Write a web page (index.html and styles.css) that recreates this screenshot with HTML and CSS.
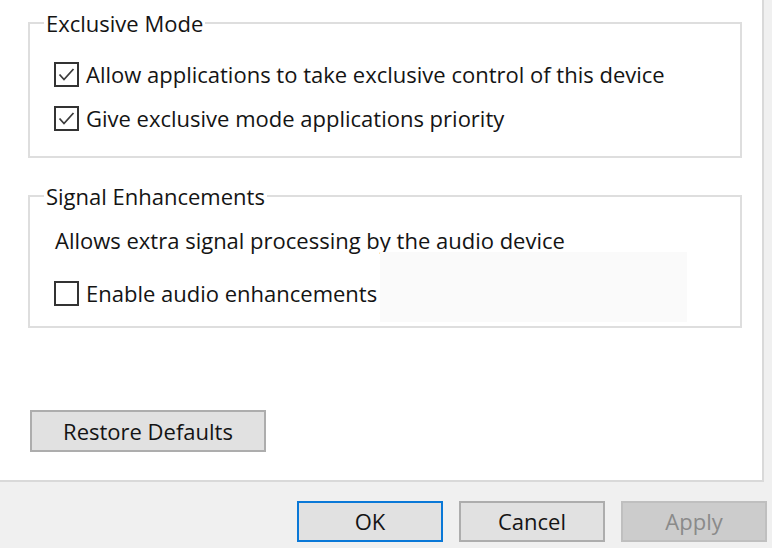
FILE: index.html
```html
<!DOCTYPE html>
<html>
<head>
<meta charset="utf-8">
<link rel="stylesheet" href="styles.css">
</head>
<body>
<div class="dialog">
  <div class="panel">
    <fieldset class="group group-exclusive">
      <legend>Exclusive Mode</legend>
      <label class="row">
        <span class="box"><svg viewBox="0 0 25 25" width="25" height="25"><polyline points="5.5,12.5 10,17.5 19.5,7" fill="none" stroke="#3c3c3c" stroke-width="1.8"/></svg></span>
        <span>Allow applications to take exclusive control of this device</span>
      </label>
      <label class="row">
        <span class="box"><svg viewBox="0 0 25 25" width="25" height="25"><polyline points="5.5,12.5 10,17.5 19.5,7" fill="none" stroke="#3c3c3c" stroke-width="1.8"/></svg></span>
        <span>Give exclusive mode applications priority</span>
      </label>
    </fieldset>
    <fieldset class="group group-signal">
      <legend>Signal Enhancements</legend>
      <div class="row desc">Allows extra signal processing by the audio device</div>
      <label class="row">
        <span class="box"></span>
        <span>Enable audio enhancements</span>
      </label>
      <div class="smudge"></div>
    </fieldset>
    <div class="restore-wrap">
      <button class="btn restore">Restore Defaults</button>
    </div>
  </div>
  <div class="footer">
    <button class="btn ok">OK</button>
    <button class="btn">Cancel</button>
    <button class="btn disabled">Apply</button>
  </div>
</div>
</body>
</html>
```
FILE: styles.css
```css
html, body {
  margin: 0;
  padding: 0;
}
body {
  width: 772px;
  height: 548px;
  overflow: hidden;
  background: #f0f0f0;
  font-family: "Open Sans", "Noto Sans", sans-serif;
  font-size: 22px;
  color: #141414;
}
.dialog {
  width: 772px;
  height: 548px;
}
.panel {
  width: 764px;
  height: 482px;
  box-sizing: border-box;
  background: #ffffff;
  border-right: 2px solid #d9d9d9;
  border-bottom: 2px solid #d9d9d9;
  padding-top: 9px;
  position: relative;
}
.group {
  margin: 0 0 0 28px;
  width: 714px;
  box-sizing: border-box;
  border: 2px solid #dedede;
  padding: 0 0 0 24px;
  position: relative;
}
.group legend {
  padding: 0 2px;
  margin-left: -10px;
  line-height: 28px;
  height: 28px;
}
.group-exclusive {
  height: 149px;
  padding-top: 15px;
}
.group-signal {
  margin-top: 24px;
  height: 146px;
  padding-top: 12px;
}
.row {
  display: flex;
  align-items: center;
  height: 44px;
  gap: 7px;
  white-space: nowrap;
}
.row.desc {
  height: 36px;
  padding-left: 1px;
}
.group-signal .row:not(.desc) {
  margin-top: 15px;
  height: 40px;
}
.box {
  width: 25px;
  height: 25px;
  box-sizing: border-box;
  border: 2px solid #333333;
  background: #ffffff;
  display: flex;
  align-items: center;
  justify-content: center;
  flex: none;
}
.box svg {
  display: block;
  flex: none;
}
.smudge {
  position: absolute;
  left: 350px;
  top: 42px;
  width: 307px;
  height: 70px;
  background: #fafafa;
}
.restore-wrap {
  padding: 82px 0 0 30px;
}
.btn {
  font-family: "Open Sans", "Noto Sans", sans-serif;
  font-size: 22px;
  color: #141414;
  background: #e1e1e1;
  border: 2px solid #adadad;
  box-sizing: border-box;
  padding: 0;
  margin: 0;
  width: 146px;
  height: 41px;
  line-height: 37px;
}
.btn.restore {
  width: 236px;
  height: 42px;
}
.footer {
  display: flex;
  justify-content: flex-end;
  gap: 16px;
  padding: 19px 5px 0 0;
}
.btn.ok {
  border: 2px solid #0a78d7;
}
.btn.disabled {
  background: #cccccc;
  border-color: #bfbfbf;
  color: #8a8a8a;
}
```
